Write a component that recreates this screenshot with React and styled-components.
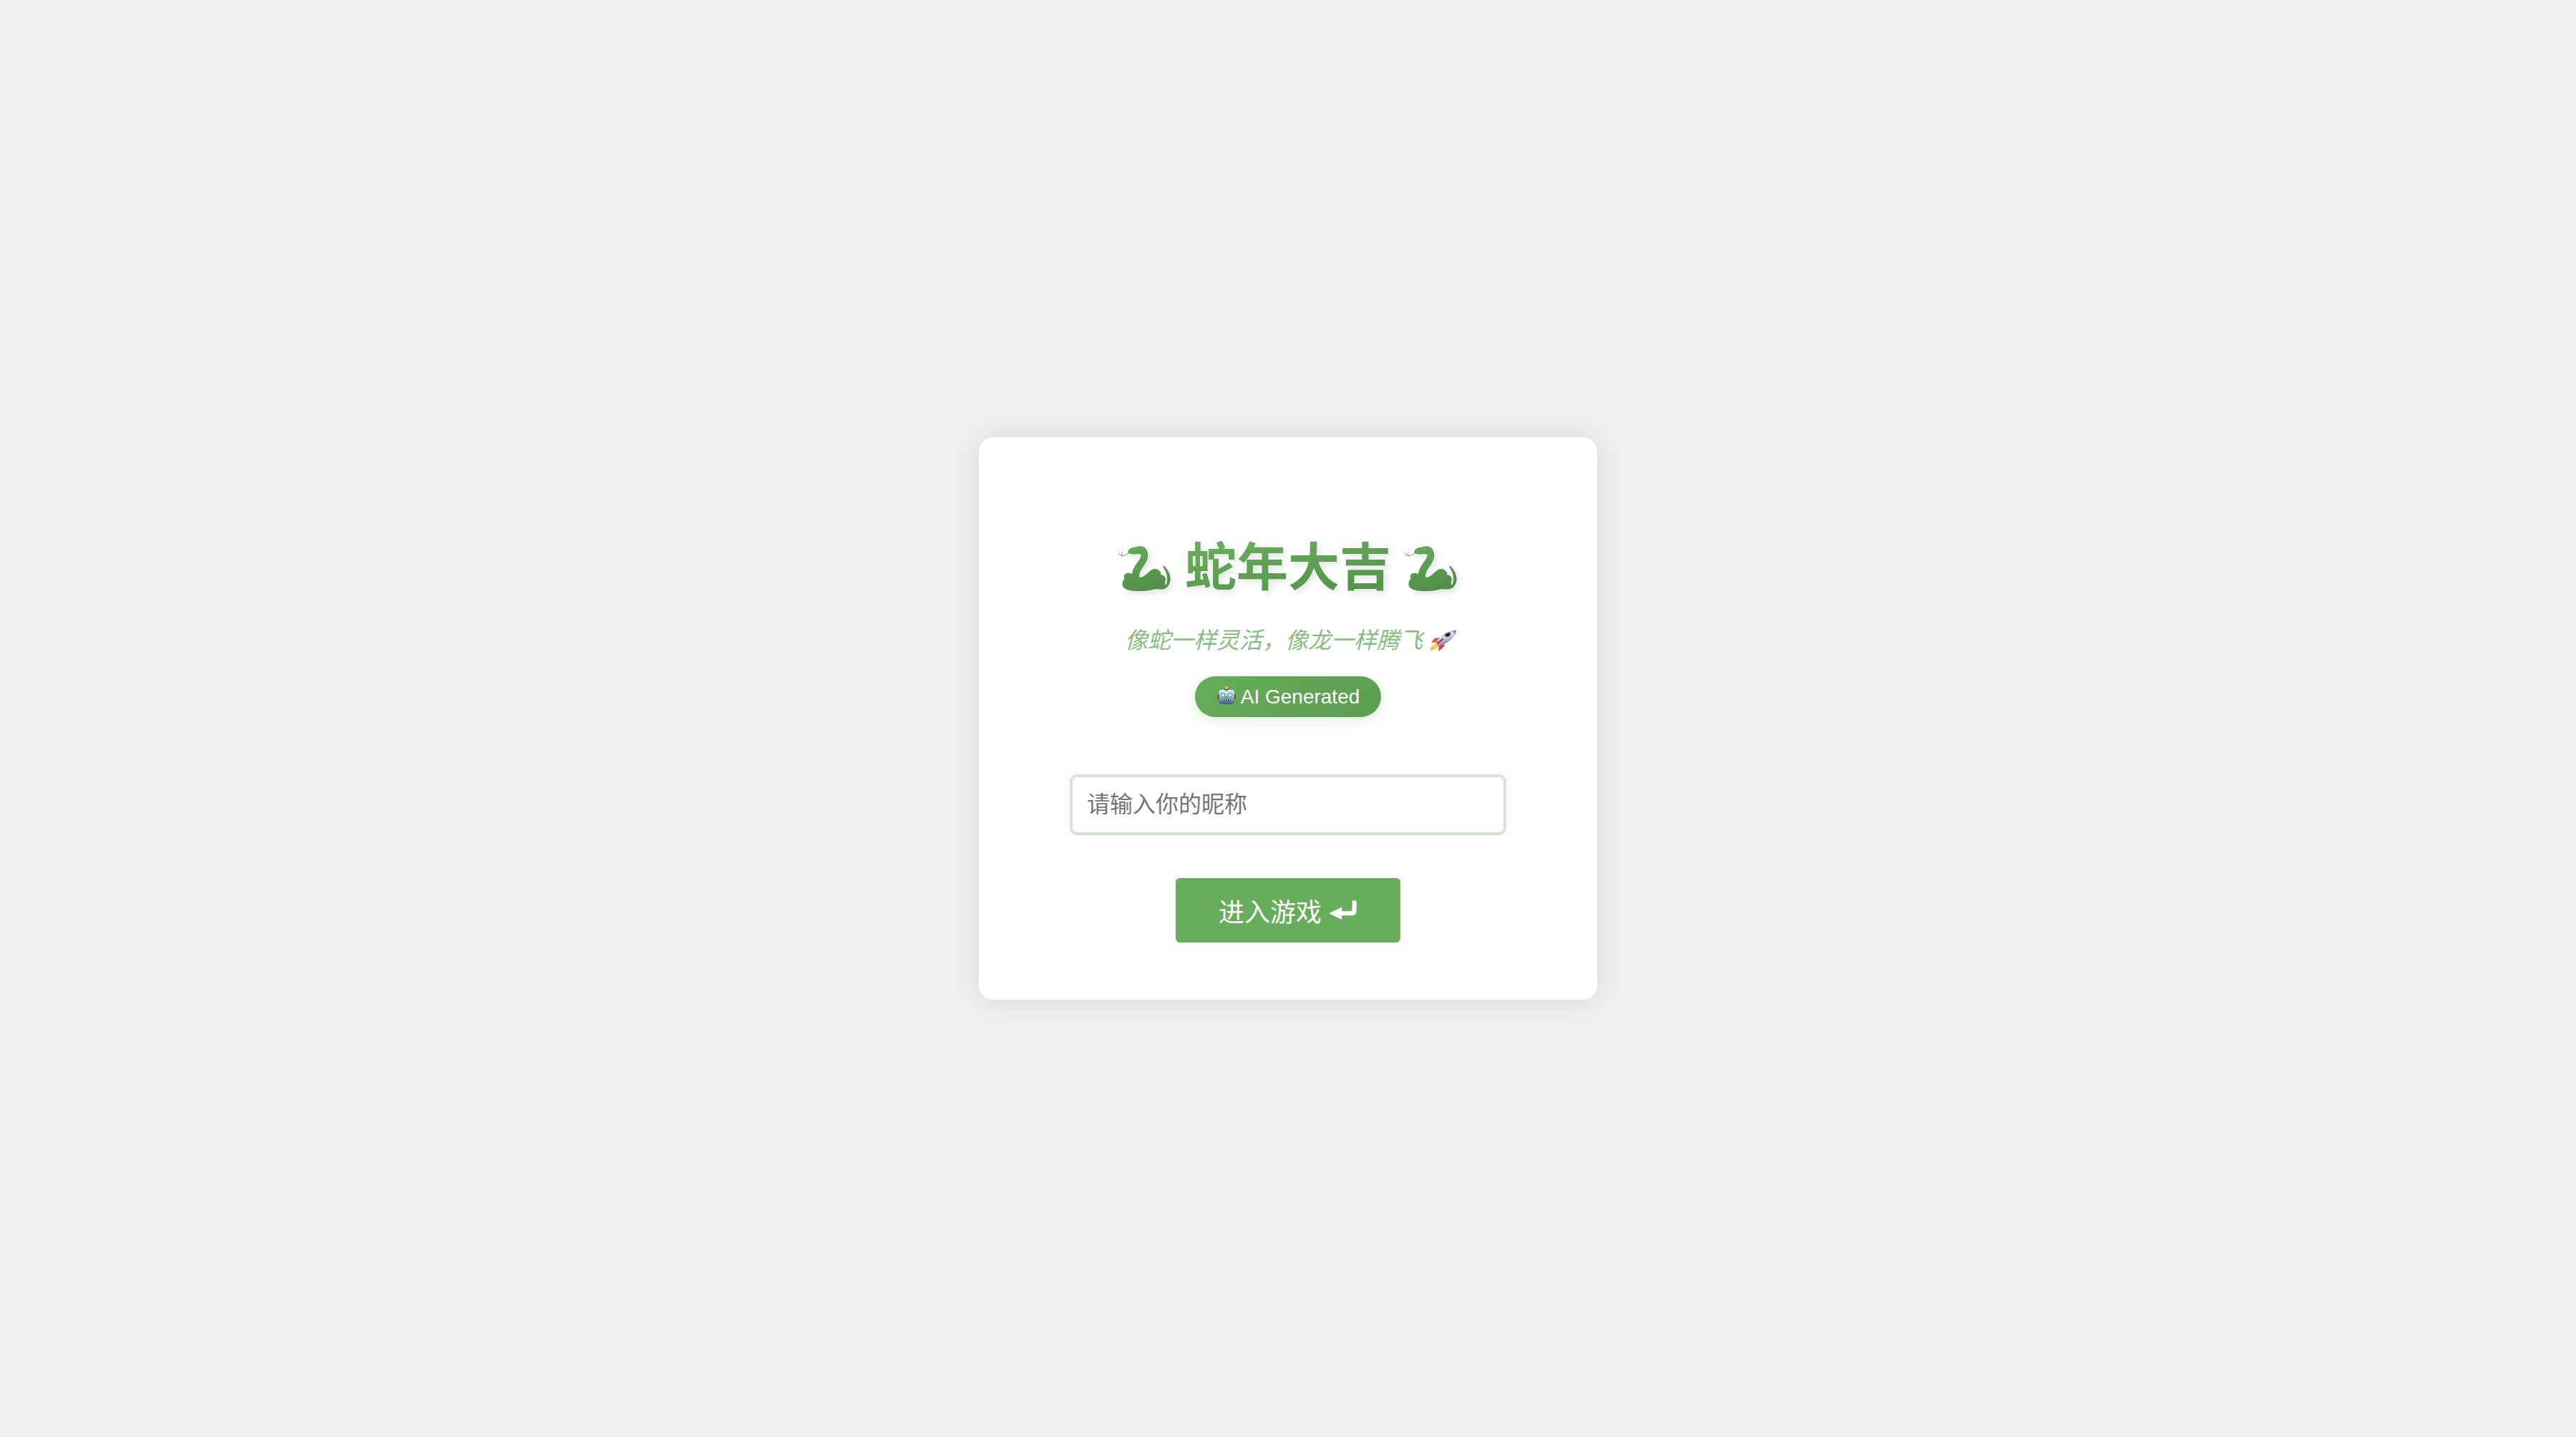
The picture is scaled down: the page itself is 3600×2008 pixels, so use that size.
import React, { useState } from "react";
import styled, { createGlobalStyle } from "styled-components";

const GlobalStyle = createGlobalStyle`
  * { box-sizing: border-box; }
  body {
    margin: 0;
    background: #f0f0f0;
    font-family: "Liberation Sans", "Noto Sans CJK SC", sans-serif;
  }
`;

const Page = styled.main`
  min-height: 100vh;
  display: flex;
  align-items: center;
  justify-content: center;
`;

const Card = styled.form`
  display: flex;
  flex-direction: column;
  align-items: center;
  width: 864px;
  max-width: 100%;
  padding: 128px 80px 80px;
  border-radius: 20px;
  background: #fff;
  box-shadow: 0 0 40px rgba(0, 0, 0, 0.1);
`;

const Title = styled.h1`
  display: flex;
  align-items: center;
  gap: 20px;
  margin: 0;
  font-size: 72px;
  line-height: 108px;
  font-weight: 700;
  filter: drop-shadow(4px 4px 4px rgba(0, 0, 0, 0.1));
`;

const TitleText = styled.span`
  color: transparent;
  background: linear-gradient(170deg, #66ac5a 20%, #56934c 80%);
  background-clip: text;
`;

const Subtitle = styled.p`
  display: flex;
  align-items: center;
  gap: 10px;
  margin: 24px 0 26px;
  padding-left: 8px;
  color: #86be7f;
  font-size: 32px;
  line-height: 48px;
  font-style: italic;
`;

const Badge = styled.div`
  display: flex;
  align-items: center;
  gap: 8px;
  height: 57px;
  padding: 0 30px;
  border-radius: 40px;
  color: #fff;
  background: linear-gradient(135deg, #67ad5b, #5c9c52);
  box-shadow: 0 4px 16px rgba(103, 173, 91, 0.2);
  font-size: 28px;
`;

const NameInput = styled.input`
  width: 610px;
  max-width: 100%;
  height: 85px;
  margin: 80px 0 60px;
  padding: 0 20px;
  border: 4px solid #d0e7d0;
  border-radius: 10px;
  outline: none;
  background: #fff;
  color: #333;
  font: inherit;
  font-size: 32px;
  &::placeholder { color: #757575; opacity: 1; }
`;

const EnterButton = styled.button`
  display: flex;
  align-items: center;
  gap: 8px;
  height: 90px;
  padding: 0 60px;
  border: 0;
  border-radius: 6px;
  background: #67ad5b;
  color: #fff;
  font: inherit;
  font-size: 36px;
  cursor: pointer;
`;

const Icon = styled.svg`
  display: block;
  flex: none;
  width: ${(p) => p.$w}px;
  height: ${(p) => p.$h}px;
  overflow: visible;
`;

function Snake({ id }) {
  return (
    <Icon $w={72} $h={72} viewBox="12 3 216 216" aria-hidden="true">
      <defs>
        <linearGradient id={id} x1="0" y1="0" x2="0.3" y2="1">
          <stop offset="0" stopColor="#65aa59" />
          <stop offset="1" stopColor="#538f4a" />
        </linearGradient>
      </defs>
      <path
        fill={`url(#${id})`}
        d="M50 51C46 44 50 37 60 31C66 27 74 28 82 25C94 21 110 20 120 28C129 36 134 50 133 62C132 80 122 95 112 109C102 123 96 137 96 149C98 155 108 152 115 148C127 139 138 127 149 120C162 113 180 119 187 132L186 141C197 141 207 150 207 161C207 167 203 170 203 174C206 178 204 184 206 186C213 178 215 163 213 150C211 134 204 121 197 111C194 106 198 102 202 105C216 120 225 136 227 155C228 174 220 190 207 198C194 205 177 202 162 202C147 207 125 210 100 210C76 210 52 208 38 200C22 192 22 170 35 159C29 148 34 135 48 134C56 133 60 138 66 138C68 122 78 103 90 88C98 77 104 67 104 59C104 54 96 53 88 54C76 57 62 56 50 51Z"
      />
      <path d="M52 51C42 55 36 61 28 62C23 61 21 55 25 46M28 62C20 63 13 58 12 50" fill="none" stroke="#66ab5a" strokeWidth="3" />
    </Icon>
  );
}

function Rocket() {
  return (
    <Icon $w={38} $h={32} viewBox="51 50 114 96" aria-hidden="true">
      <defs>
        <linearGradient id="hull" x1="0.3" y1="0.1" x2="0.7" y2="0.9">
          <stop offset="0" stopColor="#7f93ad" />
          <stop offset="0.4" stopColor="#dbe4ee" />
          <stop offset="0.7" stopColor="#8ea9c9" />
          <stop offset="1" stopColor="#4f5b73" />
        </linearGradient>
        <linearGradient id="flame" x1="1" y1="0" x2="0" y2="1">
          <stop offset="0" stopColor="#fff3a0" />
          <stop offset="0.6" stopColor="#f9c846" />
          <stop offset="1" stopColor="#ee9a4d" />
        </linearGradient>
      </defs>
      <path d="M96 86L72 88Q64 95 58 106L84 106Z" fill="#e2583a" />
      <path d="M112 114L113 120Q104 134 88 142L90 118Z" fill="#d8432f" />
      <path d="M76 108C64 114 56 126 53 140C66 138 80 134 88 124L86 112Z" fill="url(#flame)" />
      <path d="M77 110C88 84 118 58 162 54C160 84 126 114 86 122Q78 118 77 110Z" fill="url(#hull)" />
      <path d="M147 57L162 54Q162 66 156 76Q155 64 147 57Z" fill="#6f8fbb" />
      <ellipse cx="127" cy="74" rx="13" ry="8" transform="rotate(-25 127 74)" fill="#9a3036" />
      <ellipse cx="127" cy="74" rx="9" ry="5" transform="rotate(-25 127 74)" fill="#221f2c" />
      <path d="M84 110L106 92" stroke="#c53a30" strokeWidth="7" strokeLinecap="round" />
    </Icon>
  );
}

function Robot() {
  return (
    <Icon $w={26} $h={30} viewBox="16 26 78 90" aria-hidden="true">
      <defs>
        <linearGradient id="head" x1="0" y1="0" x2="0" y2="1">
          <stop offset="0" stopColor="#e3f1f3" />
          <stop offset="0.45" stopColor="#a9cbd2" />
          <stop offset="1" stopColor="#2f6274" />
        </linearGradient>
      </defs>
      <path d="M21 61h8v20h-8zM88 61h8v20h-8z" fill="#a52f3a" />
      <rect x="27" y="40" width="63" height="61" rx="11" fill="url(#head)" />
      <path d="M48 38Q58 30 68 38Q66 44 58 44Q50 44 48 38Z" fill="#5b3f78" />
      <circle cx="58" cy="32" r="7" fill="#f3b83e" />
      <g fill="#f4ffff" stroke="#3aa6cc" strokeWidth="4">
        <circle cx="43" cy="63" r="8" />
        <circle cx="74" cy="63" r="8" />
      </g>
      <path d="M58 64L52 75H64Z" fill="#e04a42" />
      <rect x="42" y="79" width="33" height="10" rx="4" fill="#24404c" />
      <path d="M47 81v6M54 81v6M62 81v6M70 81v6" stroke="#f4f4f4" strokeWidth="4" />
    </Icon>
  );
}

function ReturnArrow() {
  return (
    <Icon $w={42} $h={30} viewBox="0 0 42 30" aria-hidden="true">
      <path d="M34.7 1.5H40.7V16Q40.7 22.3 34 22.3H20.3V28L2 19.3L20.3 10.5V16.3H31.5Q34.7 16.3 34.7 13Z" fill="#fff" />
    </Icon>
  );
}

export default function App() {
  const [name, setName] = useState("");
  return (
    <Page>
      <GlobalStyle />
      <Card onSubmit={(e) => e.preventDefault()}>
        <Title>
          <Snake id="snakeLeft" />
          <TitleText>蛇年大吉</TitleText>
          <Snake id="snakeRight" />
        </Title>
        <Subtitle>像蛇一样灵活，像龙一样腾飞<Rocket /></Subtitle>
        <Badge><Robot />AI Generated</Badge>
        <NameInput
          aria-label="请输入你的昵称"
          placeholder="请输入你的昵称"
          value={name}
          onChange={(e) => setName(e.target.value)}
        />
        <EnterButton type="submit">进入游戏<ReturnArrow /></EnterButton>
      </Card>
    </Page>
  );
}
